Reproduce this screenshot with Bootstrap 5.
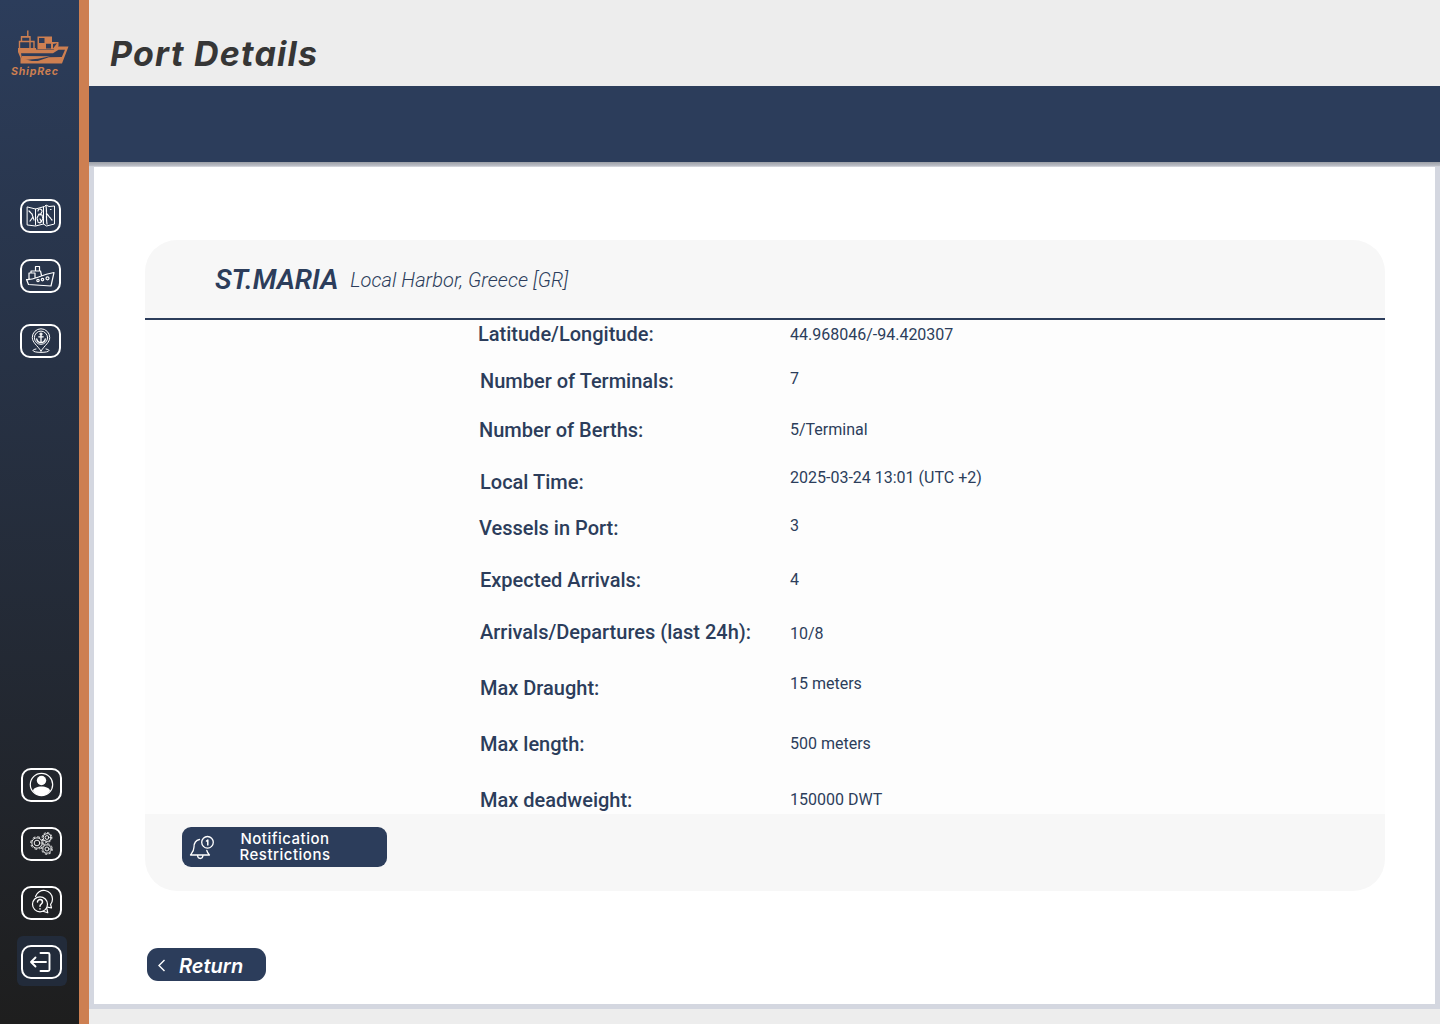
<!DOCTYPE html>
<html lang="en">
<head>
<meta charset="utf-8">
<title>ShipRec - Port Details</title>
<link href="https://cdn.jsdelivr.net/npm/bootstrap@5.3.0/dist/css/bootstrap.min.css" rel="stylesheet">
<style>
:root{--navy:#2c3d5b;--rust:#cd7f51}
body{font-family:Roboto,sans-serif;color:var(--navy);background:#ededed;width:1440px;height:1024px;overflow:hidden}
.side{width:89px;border-right:10px solid var(--rust);background:linear-gradient(#2c3d5b 0%,#1e1e1e 100%);padding-top:28px;padding-bottom:38px}
.logo-svg{width:60px;height:52px;margin-left:10px}
.side-group{padding-left:20px}
.side-group.upper{padding-top:119px}
.side-group.low{padding-left:21px;padding-bottom:7px;gap:25px}
.tile{width:41px;height:34px;border:2px solid #fff;border-radius:10px;color:#fff;padding:0}
.tile.vessel{margin-top:26px}
.tile.ports{margin-top:31px}
.tile svg{width:37px;height:30px;display:block;fill:none;stroke:currentColor;stroke-width:1.2;stroke-linecap:round;stroke-linejoin:round}
.exit-pad{width:50px;height:50px;margin:-9px 0 -7px -4px;padding:9px 0 0 4px;border-radius:6px;background:#222b3a}
.title-bar{height:86px;padding:27px 0 0 21px}
.title-bar h1{font:italic 700 34px/54px Inter,sans-serif;color:#363636;letter-spacing:1.25px;white-space:nowrap}
.band{height:76px;background:var(--navy)}
.sheet{height:847px;border:5px solid #d4d7e0;border-top:0;background:#fff}
.sheet-shade{height:5px;margin:0 -5px;background:linear-gradient(#9b9fa6,#b9bcc4 70%,#dcdee4)}
.port{width:1240px;height:651px;margin:73px 0 0 51px;border-radius:32px;background:#f7f7f7;overflow:hidden}
.port-head{height:80px;border-bottom:2px solid var(--navy);padding:2px 0 0 70px}
.port-name{font:italic 600 28px/40px Roboto,sans-serif}
.port-place{font:italic 300 20px/40px Roboto,sans-serif;margin-left:12px;letter-spacing:.06px}
.port-body{height:494px;background:#fdfdfd;padding-left:335px}
.labels{width:310px;padding-top:2px;font:500 20px/24px Roboto,sans-serif}
.values{padding-top:5px;font:400 16px/19px Roboto,sans-serif}
.labels>*,.values>*{white-space:nowrap}
.labels :nth-child(1){margin:0 0 23px -2px}
.labels :nth-child(2){margin-bottom:25px}
.labels :nth-child(3){margin:0 0 28px -1px}
.labels :nth-child(4){margin-bottom:22px}
.labels :nth-child(5){margin:0 0 28px -1px}
.labels :nth-child(6){margin-bottom:28px}
.labels :nth-child(n+7){margin-bottom:32px}
.values :nth-child(1){margin-bottom:25px}
.values :nth-child(2){margin-bottom:32px}
.values :nth-child(3),.values :nth-child(4){margin-bottom:29px}
.values :nth-child(5),.values :nth-child(6){margin-bottom:35px}
.values :nth-child(7){margin-bottom:31px}
.values :nth-child(8){margin-bottom:41px}
.values :nth-child(9){margin-bottom:37px}
.port-foot{padding:13px 0 0 37px}
.btn-navy{background:var(--navy);color:#fff;border:0}
.btn-note{width:205px;height:40px;border-radius:9px;padding:0 0 0 6px}
.btn-note span{font:500 15px/16px Inter,sans-serif;letter-spacing:.5px;margin-left:19px;width:100px;text-align:center}
.btn-back{width:119px;height:33px;border-radius:11px;margin:57px 0 0 53px;padding:2px 0 0 10px}
.btn-back span{font:italic 600 20px/30px Inter,sans-serif;margin-left:12px}
</style>
<script src="https://cdn.jsdelivr.net/npm/bootstrap@5.3.0/dist/js/bootstrap.bundle.min.js"></script>
</head>
<body class="d-flex">
<nav class="side d-flex flex-column flex-shrink-0 h-100">
  <svg class="logo-svg" viewBox="0 0 60 52">
    <g fill="none" stroke="#cd7f51" stroke-width="1.400">
      <path d="M11.500 13v-4h8.500v4M9.500 20.500V13.500h14.500v7M17.800 9V2.500M11 8.700h9.500M20 13.500v6.500"/>
    </g>
    <path d="M27.500 8.500H42V14h6.500v7h-21z" fill="#cd7f51"/>
    <path d="M29 10h5.500v5H29zM36 15.800h5v4.700h-5zM43 20.500V16l4-.8z" fill="#2c3c5a"/>
    <path d="M8 20h18v1.500h17.500l5.500-3h9.500L52 35.500H10.500V30L8 24z" fill="#cd7f51"/>
    <path d="M11 25.300h32l5.500-3.500h6.500l-3.200 7.200-13 .3-11 3.700H22l-10-2.500z" fill="#2c3c5a"/>
    <path d="M12 28l28 .2-12 2.500-16 1.500z" fill="#cd7f51"/>
    <text x="1" y="47" font-family="Inter,sans-serif" font-style="italic" font-weight="700" font-size="10.600" textLength="47" lengthAdjust="spacing" fill="#cd7f51">ShipRec</text>
  </svg>
  <div class="side-group upper">
    <a class="tile d-block" href="#"><svg viewBox="0 0 37 30"><path d="M5.500 6l8 2 9-2.500 1.500-1.500 3 1.500 5.500-.5v18l-8 2-3-2-8 2-8-1zM13.500 8v16M21.500 6v17" stroke-width="1"/><path d="M7 10l3 3 2 6M8 20l3-4M15 17l2-4 3 1 1 4-3 4-2-1zM16 10a2 2 0 114 0c0 1.500-2 4-2 4M24 5c1 6 0 11 1 18M25 13l5 6M28.500 8.500h.5M18 18l2 3" stroke-dasharray="2.500 .8"/></svg></a>
    <a class="tile vessel d-block" href="#"><svg viewBox="0 0 37 30"><path d="M4.500 18.500c5 .5 8-1 12-2.500 6-2.500 9-3.500 15.500-4.500l-3 13.500-22.500-1.500zM7 18v-6h6v5M9 12v-2h9.500l1 4.500M13.500 10V5.500h4V10"/><circle cx="16" cy="19.500" r="1.200"/><circle cx="20.500" cy="18.600" r="1.200"/><circle cx="25.500" cy="17.300" r="1.500"/></svg></a>
    <a class="tile ports d-block" href="#"><svg viewBox="0 0 37 30"><g stroke-width="1"><path d="M19 25c-4-6-8.700-8.500-8.700-13.500a8.700 8.700 0 0117.400 0C27.700 16.500 23 19 19 25z"/><circle cx="19" cy="11.700" r="6.600"/><path d="M14 23c-2 .4-3 .8-3 1.500 0 2.500 16 2.500 16 0 0-.7-1-1.100-3-1.500"/></g><circle cx="19" cy="8" r="1"/><path d="M19 9v7.500M16.800 10.800h4.400M14.700 13c.5 2.500 2 3.500 4.300 3.700 2.300-.2 3.800-1.200 4.300-3.700" stroke-width="1.300"/></svg></a>
  </div>
  <div class="side-group low d-flex flex-column mt-auto">
    <a class="tile" href="#"><svg viewBox="0 0 37 30"><circle cx="18.500" cy="14.500" r="11.200"/><circle cx="18.500" cy="10.500" r="4.700" fill="#fff" stroke="none"/><path d="M10 21c0-6 17-6 17 0-4 6-13 6-17 0z" fill="#fff" stroke="none"/></svg></a>
    <a class="tile" href="#"><svg viewBox="0 0 37 30"><g stroke-width=".9"><circle cx="14" cy="14" r="2.800"/><circle cx="14" cy="14" r="5.200"/><circle cx="14" cy="14" r="6.300" stroke-dasharray="2 2.950"/><circle cx="24" cy="8.500" r="1.900"/><circle cx="24" cy="8.500" r="3.900"/><circle cx="24" cy="8.500" r="4.900" stroke-dasharray="1.500 2.350"/><circle cx="24" cy="20" r="2"/><circle cx="24" cy="20" r="4.200"/><circle cx="24" cy="20" r="5.300" stroke-dasharray="1.700 2.460"/></g></svg></a>
    <a class="tile" href="#"><svg viewBox="0 0 37 30"><circle cx="17" cy="16.300" r="7.500"/><path d="M20 23.200l4.800 1.600-1-4.500M12.500 8.500A8.700 8.700 0 0129.500 11c0 2.500-.8 4-1.900 5.300l.9 3.700-4-.8"/><path d="M14.500 14c0-3.200 5-3.200 5 .1 0 2-2.500 1.900-2.500 4.200M17 20.800v.2" stroke-width="1.500"/></svg></a>
    <div class="exit-pad"><a class="tile d-block" href="#"><svg viewBox="0 0 37 30"><g stroke-width="1.900"><path d="M8 15h15M12.500 10.500L8 15l4.500 4.500M17.500 6h7.500q1.500 0 1.500 1.500v15q0 1.500-1.500 1.500h-7.500"/></g></svg></a></div>
  </div>
</nav>
<main class="flex-grow-1">
  <header class="title-bar"><h1 class="m-0">Port Details</h1></header>
  <div class="band"></div>
  <section class="sheet">
    <div class="sheet-shade"></div>
    <div class="port">
      <div class="port-head d-flex align-items-center"><span class="port-name">ST.MARIA</span><span class="port-place">Local Harbor, Greece [GR]</span></div>
      <div class="port-body d-flex">
        <div class="labels"><div>Latitude/Longitude:</div><div>Number of Terminals:</div><div>Number of Berths:</div><div>Local Time:</div><div>Vessels in Port:</div><div>Expected Arrivals:</div><div>Arrivals/Departures (last 24h):</div><div>Max Draught:</div><div>Max length:</div><div>Max deadweight:</div></div>
        <div class="values"><div>44.968046/-94.420307</div><div>7</div><div>5/Terminal</div><div>2025-03-24 13:01 (UTC +2)</div><div>3</div><div>4</div><div>10/8</div><div>15 meters</div><div>500 meters</div><div>150000 DWT</div></div>
      </div>
      <div class="port-foot">
        <button class="btn btn-navy btn-note d-flex align-items-center"><svg width="28" height="28" viewBox="0 0 28 28" fill="none" stroke="#fff" stroke-width="1.300" stroke-linecap="round" stroke-linejoin="round"><path d="M11.500 6.500C7 7.500 6 10.500 6 14c0 4-1.500 5.500-3.500 8h19c-1.300-1.500-2.300-2.500-2.700-4.500M9.500 22.500c.5 4 5 4 5.500 0"/><circle cx="19.500" cy="9.300" r="5.800"/><path d="M18.500 8l1.300-1v5" stroke-width="1.500"/></svg><span>Notification Restrictions</span></button>
      </div>
    </div>
    <button class="btn btn-navy btn-back d-flex align-items-center"><svg width="10" height="14" viewBox="0 0 10 14" fill="none" stroke="#fff" stroke-width="1.400"><path d="M7.500 1L2 6.500 7.500 12"/></svg><span>Return</span></button>
  </section>
</main>
</body>
</html>
